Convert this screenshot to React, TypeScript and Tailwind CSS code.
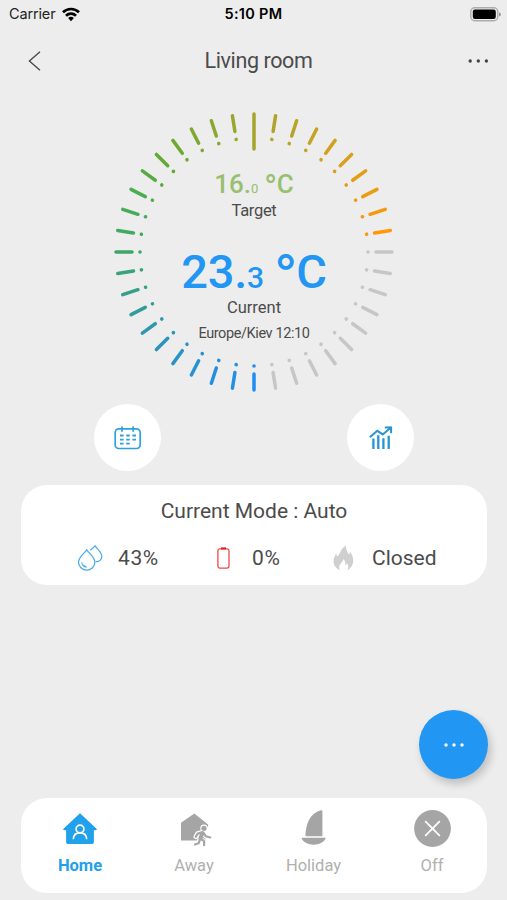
import React from "react";

type Rgb = [number, number, number];

// Colour stops of the dial, in degrees travelled clockwise from the bottom.
const stops: [number, Rgb][] = [
  [0, [30, 142, 242]],
  [45, [44, 148, 186]],
  [90, [62, 167, 104]],
  [117, [74, 174, 80]],
  [135, [98, 170, 52]],
  [180, [165, 165, 44]],
  [225, [216, 160, 30]],
  [261, [255, 151, 8]],
];

function dialColor(deg: number): string {
  if (deg > 261) return "#c6c6c6";
  for (let i = 1; i < stops.length; i++) {
    const [end, b] = stops[i];
    const [start, a] = stops[i - 1];
    if (deg <= end) {
      const t = (deg - start) / (end - start);
      return `rgb(${a.map((v, k) => Math.round(v + (b[k] - v) * t)).join(",")})`;
    }
  }
  return "#c6c6c6";
}

function Dial() {
  return (
    <svg className="col-start-1 row-start-1 h-[284px] w-[284px]" viewBox="-142 -142 284 284">
      {Array.from({ length: 40 }, (_, i) => {
        const deg = i * 9;
        const color = dialColor(deg);
        const top = deg === 180;
        return (
          <g key={i} transform={`rotate(${deg})`} stroke={color} fill={color}>
            <line x1="0" x2="0" y1={top ? 103 : 122} y2="138" strokeWidth="3.5" strokeLinecap="round" />
            {!top && <circle cx="0" cy="114" r="1.8" stroke="none" />}
          </g>
        );
      })}
    </svg>
  );
}

function StatusBar() {
  return (
    <header className="flex h-7 items-center font-['Inter',sans-serif] text-[14.5px] leading-7 text-black">
      <div className="flex w-[169px] items-center pl-[9px]">
        <span className="w-[53px] tracking-[-0.15px] text-[#222]">Carrier</span>
        <svg className="h-[15px] w-[18px]" viewBox="0 0 18 15" fill="none" stroke="#000" strokeWidth="2.7">
          <path d="M1 5.2a11.6 11.6 0 0 1 16 0" />
          <path d="M4 8.7a7.3 7.3 0 0 1 10 0" />
          <path d="M6.1 11.1a4.2 4.2 0 0 1 5.8 0L9 14.2z" fill="#000" stroke="none" />
        </svg>
      </div>
      <div className="w-[169px] text-center text-[14.5px] font-semibold tracking-[0.3px]">5:10 PM</div>
      <div className="flex w-[169px] justify-end pr-[6px]">
        <svg className="h-[15px] w-[31px]" viewBox="0 0 31 15">
          <rect x="0.8" y="0.8" width="27" height="13" rx="4" fill="#ededed" stroke="#adadad" strokeWidth="1.4" />
          <rect x="2.8" y="2.6" width="23" height="9.4" rx="2.2" />
          <path d="M29 5.2v4.4q2-1 2-2.2T29 5.2z" fill="#999" />
        </svg>
      </div>
    </header>
  );
}

function CalendarIcon() {
  return (
    <svg className="h-6 w-7" viewBox="0 0 28 24" fill="none" stroke="#2fa0de" strokeWidth="1.7">
      <rect x="1.2" y="2.9" width="25" height="19.6" rx="3.6" />
      <path d="M8 0.4v5.4M19.2 0.4v5.4" strokeWidth="1.8" />
      <path d="M6 9.5h3.6M12.2 9.5h3.6M18.4 9.5H22M6 13.6h3.6M12.2 13.6h3.6M18.4 13.6H22M6 17.7h3.6M12.2 17.7h3.6" strokeWidth="1.8" />
    </svg>
  );
}

function ChartIcon() {
  return (
    <svg className="h-6 w-6" viewBox="0 0 24 24" fill="none" stroke="#2695d4" strokeWidth="2">
      <path d="M0.8 11.3 8.3 4.8l5.4 3.6 7.6-6.3" />
      <path d="M15.8 1.5h6.3v5.8" />
      <path d="M19 1.2h3.5v3.5z" fill="#2695d4" strokeWidth="0.6" />
      <path d="M4.4 12.5V23M9.3 9.2V23M14.4 12.2V23M19.7 9.7V23" strokeWidth="2.3" />
    </svg>
  );
}

function DropsIcon() {
  return (
    <svg className="h-[27px] w-[27px]" viewBox="0 0 27 27" fill="none" stroke="#4aaee6" strokeWidth="1.3">
      <path d="M9.7 4.9C7.6 7.9 1.5 12.3 1.5 17a8.2 8.2 0 0 0 16.4 0c0-4.7-6.1-9.1-8.2-12.1z" />
      <path d="M13.4 5.2C15 3.8 16.9 2.2 18.1.9c1.7 2.8 6.7 6.3 6.7 10.3 0 3.2-2.6 5.5-6 5.7" />
      <path d="M4.7 17.2c.4 3 2.2 4.7 4.7 5M6.3 19.8c1 1.2 1.9 1.8 3.3 2.1" strokeWidth="1.1" />
    </svg>
  );
}

function BatteryIcon() {
  return (
    <svg className="h-[22px] w-[13px]" viewBox="0 0 13 22" fill="none" stroke="#ef4a4a" strokeWidth="1.3">
      <rect x="0.9" y="1.8" width="11.1" height="19.3" rx="2" />
      <path d="M4 1.4h5" stroke="#d82020" strokeWidth="2" />
    </svg>
  );
}

function FlameIcon() {
  return (
    <svg className="h-[26px] w-[21px]" viewBox="0 0 21 26" fill="#cfcfcf">
      <path d="M12.7.4c.5 3 .7 6 3.6 9.4.5-1.3.4-2.3.6-3.4 2.2 3 3.6 6.4 3.3 10-.3 4-2.5 7-6 9 .8-1.5 1.3-2.7 1-4.3-.2-1.2-.7-2-1.3-3.2-.4 1.4-.8 2-1.6 2.5.3-2.5-.2-4.6-2-6.3-.3 2-1.4 3.2-2.7 4.7-1.7 2-1.9 4.1-.8 6.5C3.3 23.6.7 20.6.6 16.5.5 13.5 1.6 11 3.1 8.7c.3 1.3.6 2 1.500 2.700C8 7.5 7.8 3.6 12.7.4z" />
    </svg>
  );
}

function HomeIcon() {
  return (
    <svg className="h-8 w-9" viewBox="0 0 36 32">
      <path d="M18 .3 1.7 15.5q-1.2 1.7.5 1.7h1.9v12q0 1.8 1.8 1.8h24.2q1.8 0 1.8-1.8v-12h1.9q1.7 0 .5-1.7z" fill="#21a0ec" />
      <g fill="none" stroke="#fff" strokeWidth="1.7" strokeLinecap="round">
        <circle cx="18" cy="16" r="3.9" />
        <path d="M11.4 25.5c.3-3.6 2.9-5.6 6.6-5.6s6.3 2 6.6 5.6" />
      </g>
    </svg>
  );
}

function WalkerIcon() {
  return (
    <svg className="h-[34px] w-8" viewBox="0 0 32 34">
      <path d="M14.3.4 28.1 11.6V14H25.5V27.6H1V9.8z" fill="#a5a5a5" />
      <g fill="none" strokeLinecap="round" strokeLinejoin="round">
        <g stroke="#fff" strokeWidth="4.6">
          <circle cx="24" cy="15.3" r="1.4" />
          <path d="M22.5 19.5 20 25.5 23.5 28v5.5M19.8 26l-1.3 4.2-3.5 1.500M22.500 19.200l-5 1.300-1.700 3.300M23.500 20l2.200 3.200 4.300 1.300" />
        </g>
        <circle cx="24" cy="15.3" r="2.6" fill="#a5a5a5" />
        <path d="m22.3 20.2-2 5.3" stroke="#a5a5a5" strokeWidth="4" />
        <path d="m20.5 25.5 3.6 2.7v4M20 26.300l-1.400 4-3.600 1.200M22 19.300l-4.300 1.300-1.900 3.200M23.300 19.700l2.400 3.500 4.600 1.300" stroke="#a5a5a5" strokeWidth="2.200" />
      </g>
    </svg>
  );
}

function BoatIcon() {
  return (
    <svg className="h-[35px] w-[25px]" viewBox="0 0 25 35" fill="#a5a5a5">
      <path d="M20 .2q1.400-.2 1.400 1.200v24.800H5.300q-1 0-.9-1.200C5.200 13.700 8.300 3.600 20 .2z" />
      <path d="M1.100 27.800h23q.9 0 .4 1C22.600 32.500 18 34.700 12.600 34.700S2.600 32.500.7 28.800q-.4-1 .4-1z" />
    </svg>
  );
}

function OffIcon() {
  return (
    <svg className="h-[37px] w-[37px]" viewBox="0 0 37 37">
      <circle cx="18.5" cy="18.5" r="18.4" fill="#a5a5a5" />
      <path d="m11.7 11.7 13.6 13.6m0-13.6L11.7 25.3" stroke="#fff" strokeWidth="1.9" strokeLinecap="round" />
    </svg>
  );
}

export default function App() {
  return (
    <main className="flex h-[900px] w-[507px] flex-col overflow-hidden bg-[#ededed] font-['Roboto',sans-serif] text-[#4b4b4b]">
      <StatusBar />

      <nav className="flex h-[66px] items-center justify-between pr-[18px] pl-[28px]">
        <svg className="h-5 w-[13px]" viewBox="0 0 13 20" fill="none" stroke="#4b4b4b" strokeWidth="1.4">
          <path d="M12 .7 1.4 10 12 19.3" />
        </svg>
        <h1 className="ml-[8px] text-[21.5px] leading-[66px] tracking-[-0.4px]">Living room</h1>
        <svg className="h-1 w-[21px]" viewBox="0 0 21 4" fill="#444">
          <circle cx="2.2" cy="2" r="1.7" />
          <circle cx="10.3" cy="2" r="1.7" />
          <circle cx="18.4" cy="2" r="1.7" />
        </svg>
      </nav>

      <section className="mt-4 ml-3 grid h-[284px] w-[484px] justify-items-center">
        <Dial />
        <div className="col-start-1 row-start-1 flex flex-col items-center pt-[59px] whitespace-nowrap">
          <div className="h-[30px] text-[26px] leading-[30px] font-medium text-[#97c06f]">
            16.<span className="text-[13px] font-normal">0</span> <span className="font-['Inter',sans-serif]">°</span>C
          </div>
          <div className="mt-[1px] h-[22px] text-[16.5px] leading-[22px] tracking-[-0.3px]">Target</div>
          <div className="mt-[22px] h-[54px] text-[47px] leading-[54px] font-medium tracking-[-0.3px] text-[#2196f3]">
            23.<span className="text-[30px]">3</span> <span className="font-['Inter',sans-serif]">°</span>C
          </div>
          <div className="mt-[-1px] h-[22px] text-[16.5px] leading-[22px]">Current</div>
          <div className="mt-[5px] h-5 text-[14.5px] leading-5 tracking-[-0.4px]">Europe/Kiev 12:10</div>
        </div>
      </section>

      <div className="mt-[10px] flex h-[67px] justify-between pr-[93px] pl-[94px]">
        <button className="flex size-[67px] items-center justify-center rounded-full bg-white">
          <CalendarIcon />
        </button>
        <button className="flex size-[67px] items-center justify-center rounded-full bg-white">
          <ChartIcon />
        </button>
      </div>

      <section className="mt-[14px] ml-[21px] h-[100px] w-[466px] rounded-[26px] bg-white">
        <h2 className="pt-[11px] text-center text-[21px] leading-[30px]">Current Mode : Auto</h2>
        <div className="mt-[17px] flex h-[30px] items-center text-[21px] leading-[30px]">
          <div className="flex w-[196px] items-center pl-[56px]">
            <DropsIcon />
            <span className="ml-[14px] tracking-[0.6px]">43%</span>
          </div>
          <div className="flex w-[116px] items-center">
            <BatteryIcon />
            <span className="ml-[22px] tracking-[0.6px]">0%</span>
          </div>
          <div className="flex items-center">
            <FlameIcon />
            <span className="ml-[18px]">Closed</span>
          </div>
        </div>
      </section>

      <button className="mt-[125px] ml-[419px] flex size-[69px] shrink-0 items-center justify-center rounded-full bg-[#2196f3] shadow-[3px_5px_9px_rgba(0,0,0,0.2)]">
        <svg className="h-1 w-5" viewBox="0 0 20 4" fill="#fff">
          <circle cx="2" cy="2" r="1.7" />
          <circle cx="10" cy="2" r="1.7" />
          <circle cx="18" cy="2" r="1.7" />
        </svg>
      </button>

      <footer className="mt-[19px] ml-[21px] flex h-[95px] w-[466px] shrink-0 rounded-[26px] bg-white pt-3 text-[16.5px] leading-5 text-[#b0b0b0]">
        <div className="flex w-[118px] flex-col items-center">
          <div className="flex h-[46px] items-start pt-[3px]"><HomeIcon /></div>
          <span className="font-bold text-[#21a0ec]">Home</span>
        </div>
        <div className="flex w-[110px] flex-col items-center">
          <div className="flex h-[46px] items-start pt-[3px] pl-[3px]"><WalkerIcon /></div>
          <span>Away</span>
        </div>
        <div className="flex w-[129px] flex-col items-center">
          <div className="flex h-[46px] items-start"><BoatIcon /></div>
          <span>Holiday</span>
        </div>
        <div className="flex w-[108px] flex-col items-center">
          <div className="flex h-[46px] items-start"><OffIcon /></div>
          <span>Off</span>
        </div>
      </footer>
    </main>
  );
}
